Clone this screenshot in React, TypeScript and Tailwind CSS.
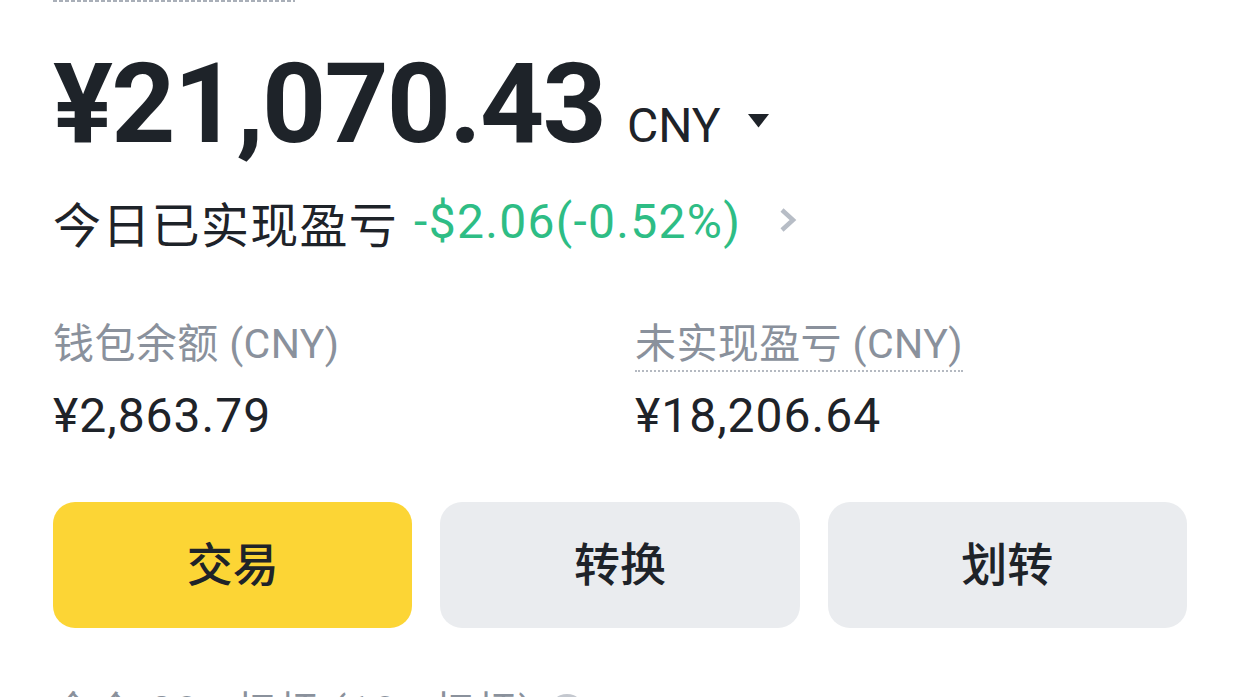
export default function App() {
  return (
    <div className="font-['Roboto','Noto_Sans_CJK_SC',sans-serif] relative w-[1240px] h-[697px] overflow-hidden bg-white px-[53px]">
      {/* leftover dashed underline from the section above */}
      <div className="h-[2px] w-[242px] bg-[repeating-linear-gradient(90deg,#a9afb8_0_4px,transparent_4px_6px)]" />

      {/* total balance */}
      <div className="mt-[46px] flex items-baseline">
        <span className="text-[112px] leading-[112px] font-bold tracking-[-1.8px] text-[#1e2329]">¥21,070.43</span>
        <span className="ml-[22px] text-[48px] leading-[48px] text-[#1e2329]">CNY</span>
        <svg className="ml-[27px] self-center mt-[34px]" width="21" height="14" viewBox="0 0 21 14">
          <path d="M0 0H21L10.5 13.5Z" fill="#1e2329" />
        </svg>
      </div>

      {/* today's realized pnl */}
      <div className="mt-[34px] flex items-center">
        <span className="text-[48px] leading-[56px] tracking-[1.3px] text-[#1e2329] font-['Noto_Sans_CJK_SC',sans-serif]">
          今日已实现盈亏
        </span>
        <span className="ml-[16px] text-[48px] leading-[56px] tracking-[1.3px] text-[#2ebd85]">-$2.06(-0.52%)</span>
        <svg className="ml-[38px] mt-[-4px]" width="18" height="26" viewBox="0 0 18 26">
          <path d="M3 3L14 13L3 23" fill="none" stroke="#b7bdc6" strokeWidth="4.5" />
        </svg>
      </div>

      {/* balances */}
      <div className="mt-[70px] grid grid-cols-[582px_1fr]">
        <div className="flex flex-col items-start">
          <div className="text-[41px] leading-[48px] tracking-[0.4px] text-[#8a919c] pb-[4px]">钱包余额 (CNY)</div>
          <div className="mt-[16px] text-[48px] leading-[56px] tracking-[1px] text-[#1e2329]">¥2,863.79</div>
        </div>
        <div className="flex flex-col items-start">
          <div className="text-[41px] leading-[48px] tracking-[0.4px] text-[#8a919c] border-b-2 border-dotted border-[#b4b9c1] pb-[2px]">
            未实现盈亏 (CNY)
          </div>
          <div className="mt-[16px] text-[48px] leading-[56px] tracking-[1px] text-[#1e2329]">¥18,206.64</div>
        </div>
      </div>

      {/* actions */}
      <div className="mt-[58px] grid grid-cols-3 gap-[28px]">
        <button className="h-[126px] rounded-[22px] bg-[#fcd535] text-[46px] font-medium text-[#1e2329]">交易</button>
        <button className="h-[126px] rounded-[22px] bg-[#eaecef] text-[46px] font-medium text-[#1e2329]">转换</button>
        <button className="h-[126px] rounded-[22px] bg-[#eaecef] text-[46px] font-medium text-[#1e2329]">划转</button>
      </div>

      {/* next section, cut off by the viewport */}
      <div className="mt-[60px] flex items-start gap-[14px] text-[40px] leading-[48px] tracking-[2.5px] text-[#8a919c]">
        <span>全仓 20x 杠杆 (10x 杠杆)</span>
        <span className="mt-[6px] h-[36px] w-[36px] shrink-0 rounded-full bg-[#c4c8cf]" />
      </div>
    </div>
  )
}
